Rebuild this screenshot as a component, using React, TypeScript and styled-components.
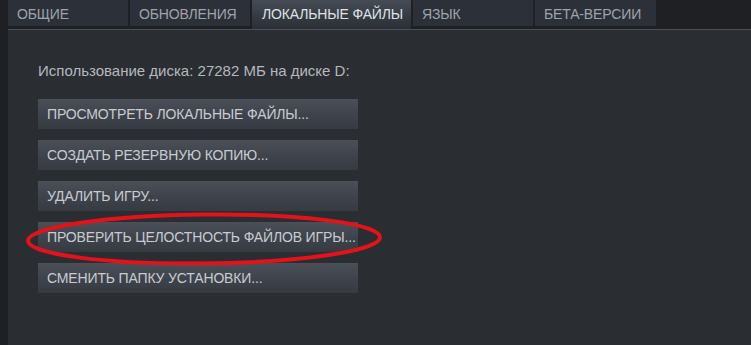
import React from "react";
import styled, { createGlobalStyle } from "styled-components";

const Global = createGlobalStyle`
  html, body { margin: 0; padding: 0; background: #1e2024; }
  body { font-family: "Liberation Sans", Arial, sans-serif; }
`;

const Window = styled.div`
  position: relative;
  width: 751px;
  height: 345px;
  background: #1e2024;
  padding-left: 8px;
  box-sizing: border-box;
  display: flex;
  flex-direction: column;
  overflow: hidden;
`;

const TabBar = styled.div`
  display: flex;
  align-items: flex-start;
  gap: 2px;
  height: 29px;
`;

const Tab = styled.div<{ $active?: boolean; $w: number }>`
  box-sizing: border-box;
  width: ${(p) => p.$w}px;
  height: ${(p) => (p.$active ? 29 : 26)}px;
  padding: 6px 0 0 ${(p) => (p.$active ? 10 : 9)}px;
  font-size: 14px;
  line-height: 16px;
  letter-spacing: -0.15px;
  white-space: nowrap;
  color: ${(p) => (p.$active ? "#dfe2e6" : "#9ea4ac")};
  background: ${(p) =>
    p.$active
      ? "linear-gradient(#464c56 0%, #363b43 55%, #2b2f35 100%)"
      : "#2c3038"};
`;

const Rule = styled.div`
  height: 1px;
  background: #4a505a;
`;

const Panel = styled.div`
  flex: 1;
  background: #2a2d32;
  padding: 33px 0 0 30px;
  display: flex;
  flex-direction: column;
  align-items: flex-start;
`;

const DiskLine = styled.div`
  font-size: 15px;
  line-height: 16px;
  color: #b5b9be;
  margin-bottom: 20px;
`;

const Buttons = styled.div`
  position: relative;
  display: flex;
  flex-direction: column;
  gap: 11px;
`;

const Button = styled.div`
  box-sizing: border-box;
  width: 320px;
  height: 30px;
  padding: 0 9px;
  display: flex;
  align-items: center;
  font-size: 14px;
  line-height: 16px;
  letter-spacing: -0.15px;
  color: #c8ccd1;
  white-space: nowrap;
  background: linear-gradient(#4a4f58 0%, #3f444c 50%, #363a41 100%);
`;

const Mark = styled.svg`
  position: absolute;
  left: -14px;
  top: 112px;
  width: 364px;
  height: 56px;
  pointer-events: none;
`;

const tabs = [
  { label: "ОБЩИЕ", w: 120 },
  { label: "ОБНОВЛЕНИЯ", w: 120 },
  { label: "ЛОКАЛЬНЫЕ ФАЙЛЫ", w: 159, active: true },
  { label: "ЯЗЫК", w: 120 },
  { label: "БЕТА-ВЕРСИИ", w: 121 },
];

const actions = [
  "ПРОСМОТРЕТЬ ЛОКАЛЬНЫЕ ФАЙЛЫ...",
  "СОЗДАТЬ РЕЗЕРВНУЮ КОПИЮ...",
  "УДАЛИТЬ ИГРУ...",
  "ПРОВЕРИТЬ ЦЕЛОСТНОСТЬ ФАЙЛОВ ИГРЫ...",
  "СМЕНИТЬ ПАПКУ УСТАНОВКИ...",
];

export default function App() {
  return (
    <>
      <Global />
      <Window>
        <TabBar>
          {tabs.map((t) => (
            <Tab key={t.label} $active={t.active} $w={t.w}>
              {t.label}
            </Tab>
          ))}
        </TabBar>
        <Rule />
        <Panel>
          <DiskLine>Использование диска: 27282 МБ на диске D:</DiskLine>
          <Buttons>
            {actions.map((a) => (
              <Button key={a}>{a}</Button>
            ))}
            <Mark viewBox="0 0 364 56">
              <ellipse
                cx="180"
                cy="28"
                rx="176"
                ry="24.5"
                fill="none"
                stroke="#e3121b"
                strokeWidth="4"
                transform="rotate(-0.6 180 28)"
              />
            </Mark>
          </Buttons>
        </Panel>
      </Window>
    </>
  );
}
